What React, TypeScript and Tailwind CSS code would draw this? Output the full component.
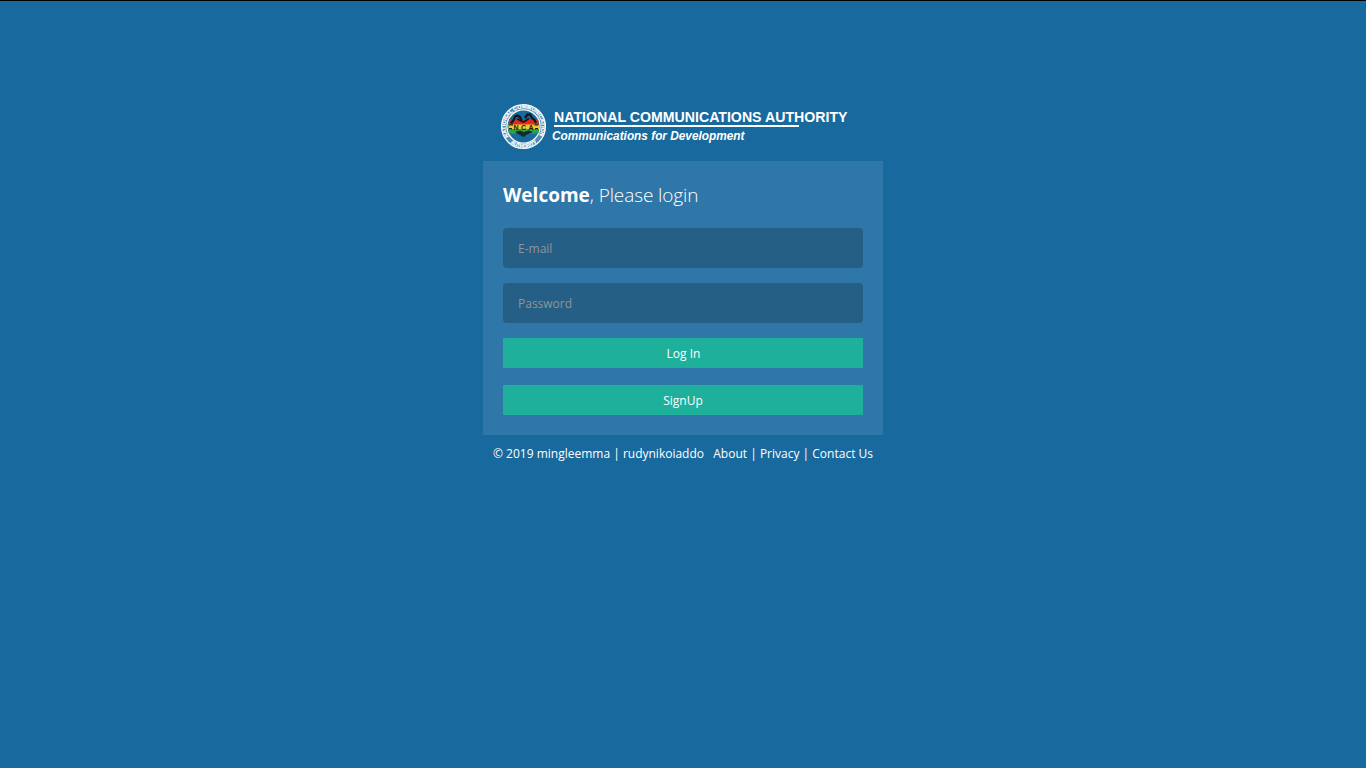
import React from 'react';

function Logo() {
  return (
    <svg width="360" height="50" viewBox="0 0 360 50" className="block" role="img" aria-label="National Communications Authority">
      <defs>
        <path id="ring-top" d="M7.8 35.5 A17.9 17.9 0 1 1 37.2 35.5" />
        <path id="ring-bottom" d="M1.2 25.5 A21.3 21.3 0 0 0 43.8 25.5" />
      </defs>
      <circle cx="22.5" cy="25.5" r="19.3" fill="none" stroke="#8db7d3" strokeWidth="5" opacity="0.45" />
      <circle cx="22.5" cy="25.5" r="21.9" fill="none" stroke="#f4f9fc" strokeWidth="1.3" />
      <circle cx="22.5" cy="25.5" r="16.6" fill="none" stroke="#f4f9fc" strokeWidth="1.3" />
      <text fontFamily="Liberation Sans, sans-serif" fontSize="5.4" fontWeight="700" fill="#ffffff" stroke="#ffffff" strokeWidth="0.25">
        <textPath href="#ring-top" textLength="76" lengthAdjust="spacingAndGlyphs">NATIONAL COMMUNICATION</textPath>
      </text>
      <text fontFamily="Liberation Sans, sans-serif" fontSize="5.6" fontWeight="700" fill="#ffffff" stroke="#ffffff" strokeWidth="0.25">
        <textPath href="#ring-bottom" startOffset="19" textLength="29" lengthAdjust="spacingAndGlyphs">AUTHORITY</textPath>
      </text>
      <path d="M8 19.5 Q15 17.5 22.5 19 Q30 17.5 37.5 19.5 V24.5 H8 Z" fill="#e5281f" />
      <rect x="7.5" y="23.5" width="30.5" height="4.8" fill="#e8cb35" />
      <path d="M7.5 28 H38 V31.5 L32 33 L27 32 L22.5 35 L17 32 L12 33 L7.5 31.5 Z" fill="#2ba34a" />
      <path d="M10 22.5 L13 18.5 L14 15.5 L16.5 14.5 L19 16 L20.5 20 M24 17 L26.5 13.5 L29 13.5 L31 17 L33.5 19 L35 22" fill="none" stroke="#15181b" strokeWidth="2.3" />
      <path d="M16 18 L22.5 21 L28 17.5" fill="none" stroke="#15181b" strokeWidth="1.6" />
      <path d="M14 31 L19 29.5 L22.5 31 L28 29.5 L32 31 L26 33.5 L22.5 36 L18 33.5 Z" fill="#142c22" />
      <text x="12.5" y="28.7" fontFamily="Liberation Sans, sans-serif" fontSize="7" fontWeight="700" fill="#18201d" textLength="20">NCA</text>
      <path d="M8 23.8h4M33.5 23.8h4M8 27.6h3M34 27.6h3" stroke="#26221b" strokeWidth="1.2" />
      <text x="53" y="21.2" fontFamily="Liberation Sans, Arial, sans-serif" fontSize="14.3" fontWeight="700" fill="#ffffff" textLength="293.5" lengthAdjust="spacingAndGlyphs">NATIONAL COMMUNICATIONS AUTHORITY</text>
      <rect x="53" y="24" width="245" height="2" fill="#ffffff" />
      <text x="51" y="38.8" fontFamily="Liberation Sans, Arial, sans-serif" fontSize="12.3" fontWeight="700" fontStyle="italic" fill="#ffffff" textLength="192.5" lengthAdjust="spacingAndGlyphs">Communications for Development</text>
    </svg>
  );
}

const fieldClass =
  'block h-10 w-full rounded bg-[#255f85] px-[15px] text-xs text-white outline-none placeholder:text-[#8f9599]';
const buttonClass = 'flex h-[30px] w-full items-center justify-center bg-[#1eb09b] pt-0.5 text-xs text-white';

export default function App() {
  return (
    <div className="min-h-screen border-t border-black bg-[#18699d] pt-[100px] font-['Open_Sans',sans-serif]">
      <main className="mx-auto w-[400px]">
        <div className="h-[60px] pl-[18px]">
          <Logo />
        </div>
        <section className="h-[274px] bg-[#2f77a8] px-5 pt-5">
          <h1 className="mb-[17px] h-[30px] text-[19px] leading-[28px] font-light text-white">
            <strong className="font-bold">Welcome</strong>
            <span className="tracking-[-0.1px]">, Please login</span>
          </h1>
          <form onSubmit={(e: React.FormEvent) => e.preventDefault()}>
            <input className={fieldClass} type="text" placeholder="E-mail" aria-label="E-mail" />
            <input className={`${fieldClass} mt-[15px]`} type="password" placeholder="Password" aria-label="Password" />
            <button type="submit" className={`${buttonClass} mt-[15px] pl-px`}>Log In</button>
            <button type="button" className={`${buttonClass} mt-[17px]`}>SignUp</button>
          </form>
        </section>
        <footer className="flex justify-between px-2.5 pt-2.5 text-xs leading-[18px] whitespace-nowrap text-white">
          <span>© 2019 mingleemma | rudynikoiaddo</span>
          <nav><a href="#about">About</a> | <a href="#privacy">Privacy</a> | <a href="#contact">Contact Us</a></nav>
        </footer>
      </main>
    </div>
  );
}
